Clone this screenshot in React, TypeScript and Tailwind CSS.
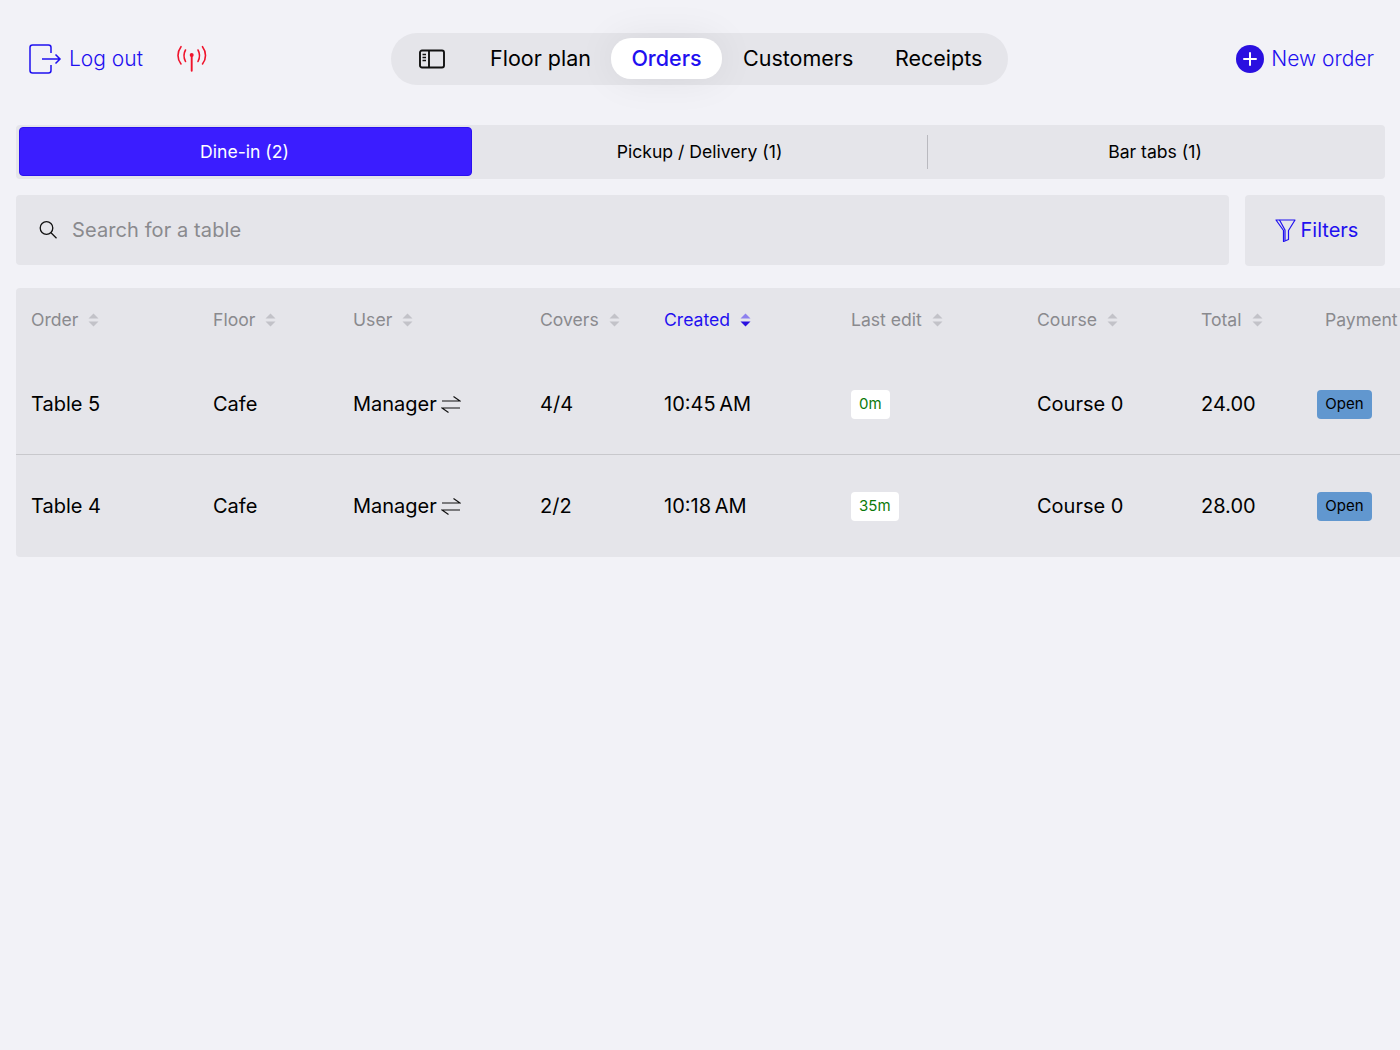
function LogoutIcon() {
  return (
    <svg width="34" height="32" viewBox="0 0 34 32" fill="none" stroke="#1f10f0" strokeWidth="1.500" className="shrink-0">
      <path d="M23 10V4.500A2.500 2.500 0 0 0 20.500 2h-16A2.500 2.500 0 0 0 2 4.500v23A2.500 2.500 0 0 0 4.500 30h16a2.500 2.500 0 0 0 2.500-2.500V22" />
      <path d="M14 16h18M27.500 11.500 32 16l-4.500 4.500" />
    </svg>
  );
}

function SignalIcon() {
  return (
    <svg width="32" height="28" viewBox="0 0 32 28" fill="none" stroke="#f0142c" strokeWidth="1.600" strokeLinecap="round">
      <path d="M15.700 11v15.700" strokeWidth="1.900" />
      <circle cx="15.700" cy="11" r="2" fill="#f0142c" stroke="none" />
      <path d="M9.500 6C7.500 9.500 7.500 13.500 9.500 17.500M22 6C24 9.500 24 13.500 22 17.500" />
      <path d="M5 2.700C1 8 1 15 5 20M26.500 2.700C30.500 8 30.500 15 26.500 20" />
    </svg>
  );
}

function SidebarIcon() {
  return (
    <svg width="26" height="20" viewBox="0 0 26 20" fill="none" stroke="#111" strokeWidth="1.900">
      <rect x="1" y="1.500" width="24" height="17" rx="2" />
      <path d="M10 1.500v17" />
      <path d="M3.500 5.500h3.500M3.500 8.500h3.500M3.500 11.500h3.500" strokeWidth="1.300" />
    </svg>
  );
}

function PlusCircle() {
  return (
    <svg width="28" height="28" viewBox="0 0 28 28">
      <circle cx="14" cy="14" r="14" fill="#2a10e0" />
      <path d="M14 8v12M8 14h12" stroke="#fff" strokeWidth="2" strokeLinecap="round" />
    </svg>
  );
}

function SearchIcon() {
  return (
    <svg width="20" height="20" viewBox="0 0 20 20" fill="none" stroke="#111" strokeWidth="1.300" className="shrink-0">
      <circle cx="8.500" cy="8" r="6.300" />
      <path d="m13 12.800 5.500 5.500" />
    </svg>
  );
}

function FunnelIcon() {
  return (
    <svg width="21" height="23" viewBox="0 0 21 23" fill="none" stroke="#1f10f0" strokeWidth="1.200" strokeLinejoin="round" className="shrink-0">
      <path d="M1 1h19l-6.500 10.500v9l-5 2V11.500z" />
      <path d="M4.500 1l5.500 10v10.500" />
    </svg>
  );
}

function SwapIcon() {
  return (
    <svg width="20" height="17" viewBox="0 0 20 17" fill="none" stroke="#111" strokeWidth="1.200" className="shrink-0">
      <path d="M1 5h18l-6.500-4.500" />
      <path d="M19 12H1l6.500 4.500" />
    </svg>
  );
}

function SortIcon({ active }: { active?: boolean }) {
  return (
    <svg width="11" height="14" viewBox="0 0 11 14" className="shrink-0">
      <path d="M5.500 0.500 10.500 5.500H0.500z" fill={active ? "#8d80ee" : "#c2c2c8"} />
      <path d="M5.500 13.500 0.500 8.500H10.500z" fill={active ? "#2a10e0" : "#c2c2c8"} />
    </svg>
  );
}

const columns = "grid grid-cols-[182px_140px_187px_124px_187px_186px_164px_116px_140px]";

const headers = ["Order", "Floor", "User", "Covers", "Created", "Last edit", "Course", "Total"];

const orders = [
  { name: "Table 5", covers: "4/4", created: "10:45\u2009AM", edit: "0m", total: "24.00" },
  { name: "Table 4", covers: "2/2", created: "10:18\u2009AM", edit: "35m", total: "28.00" },
];

export default function App() {
  return (
    <div className="h-[1050px] w-[1400px] overflow-hidden bg-[#f2f2f7] font-['Inter',sans-serif] text-black">
      <header className="grid h-[117px] grid-cols-[1fr_auto_1fr] items-center px-[26px]">
        <div className="ml-[2px] flex items-center">
          <a className="flex items-center gap-[7px] text-[21px] font-light text-[#1f10f0]">
            <LogoutIcon />
            Log out
          </a>
          <div className="mb-[2px] ml-[33px]">
            <SignalIcon />
          </div>
        </div>
        <nav className="-ml-[1px] flex h-[52px] w-[617px] items-center whitespace-nowrap rounded-[26px] bg-[#e5e5ea] text-[21.500px]">
          <span className="ml-[28px] mr-[45px]">
            <SidebarIcon />
          </span>
          <span className="w-[100px]">Floor plan</span>
          <span className="ml-[21px] flex h-[41px] w-[111px] items-center justify-center rounded-[20px] bg-white font-medium text-[#1f10f0] shadow-[0_0_40px_rgba(0,0,0,0.07)]">
            Orders
          </span>
          <span className="ml-[21px] w-[110px]">Customers</span>
          <span className="ml-[42px]">Receipts</span>
        </nav>
        <a className="flex items-center justify-end gap-[7px] text-[21px] font-light text-[#1f10f0]">
          <PlusCircle />
          New order
        </a>
      </header>

      <main className="px-[16px] pt-[8px]">
        <div className="flex h-[54px] w-[1369px] items-center rounded-[4px] bg-[#e5e5ea] px-[3px] pb-[1px] text-[17.600px]">
          <div className="flex h-[49px] w-[453px] items-center justify-center rounded-[4px] border border-[#2a10f0] bg-[#3b1dff] pr-[2px] pt-[1px] text-white">
            Dine-in (2)
          </div>
          <div className="flex h-[34px] flex-1 items-center justify-center border-r border-[#b9b9bf] pt-[1px]">Pickup / Delivery (1)</div>
          <div className="flex w-[454px] items-center justify-center pt-[1px]">Bar tabs (1)</div>
        </div>

        <div className="mt-[16px] flex w-[1369px] gap-[16px]">
          <div className="flex h-[70px] flex-1 items-center gap-[14px] rounded-[4px] bg-[#e5e5ea] pl-[22px] text-[20px] tracking-[0.1px] text-[#8a8a8e]">
            <SearchIcon />
            <span className="pb-[1px]">Search for a table</span>
          </div>
          <div className="flex h-[71px] w-[140px] items-center justify-center gap-[5px] rounded-[4px] bg-[#e5e5ea] pl-[3px] text-[20px] text-[#1f10f0]">
            <FunnelIcon />
            <span className="pb-[1px]">Filters</span>
          </div>
        </div>

        <div className="mt-[22px] h-[269px] w-[1400px] rounded-[4px] bg-[#e5e5ea] pl-[15px]">
          <div className={`${columns} h-[65px] items-center text-[17.600px] text-[#8a8a8e]`}>
            {headers.map((h) => (
              <div key={h} className={`flex items-center gap-[10px] ${h === "Created" ? "text-[#1f10f0]" : ""}`}>
                {h}
                <SortIcon active={h === "Created"} />
              </div>
            ))}
            <div className="whitespace-nowrap pl-[8px]">Payment</div>
          </div>

          {orders.map((o, i) => (
            <div
              key={o.name}
              className={`${columns} -ml-[15px] h-[102px] items-center pl-[15px] text-[20px] ${i === 0 ? "border-b border-[#c8c8cc] pt-[1px]" : ""}`}
            >
              <div>{o.name}</div>
              <div>Cafe</div>
              <div className="flex items-center gap-[4px]">
                Manager
                <SwapIcon />
              </div>
              <div>{o.covers}</div>
              <div>{o.created}</div>
              <div className="flex">
                <span className="flex h-[29px] items-center rounded-[4px] bg-white px-[8px] text-[15px] text-[#0b7a0b]">
                  {o.edit}
                </span>
              </div>
              <div>Course 0</div>
              <div>{o.total}</div>
              <div className="flex">
                <span className="flex h-[29px] w-[55px] items-center justify-center rounded-[4px] bg-[#6197cf] text-[15px]">
                  Open
                </span>
              </div>
            </div>
          ))}
        </div>
      </main>
    </div>
  );
}
